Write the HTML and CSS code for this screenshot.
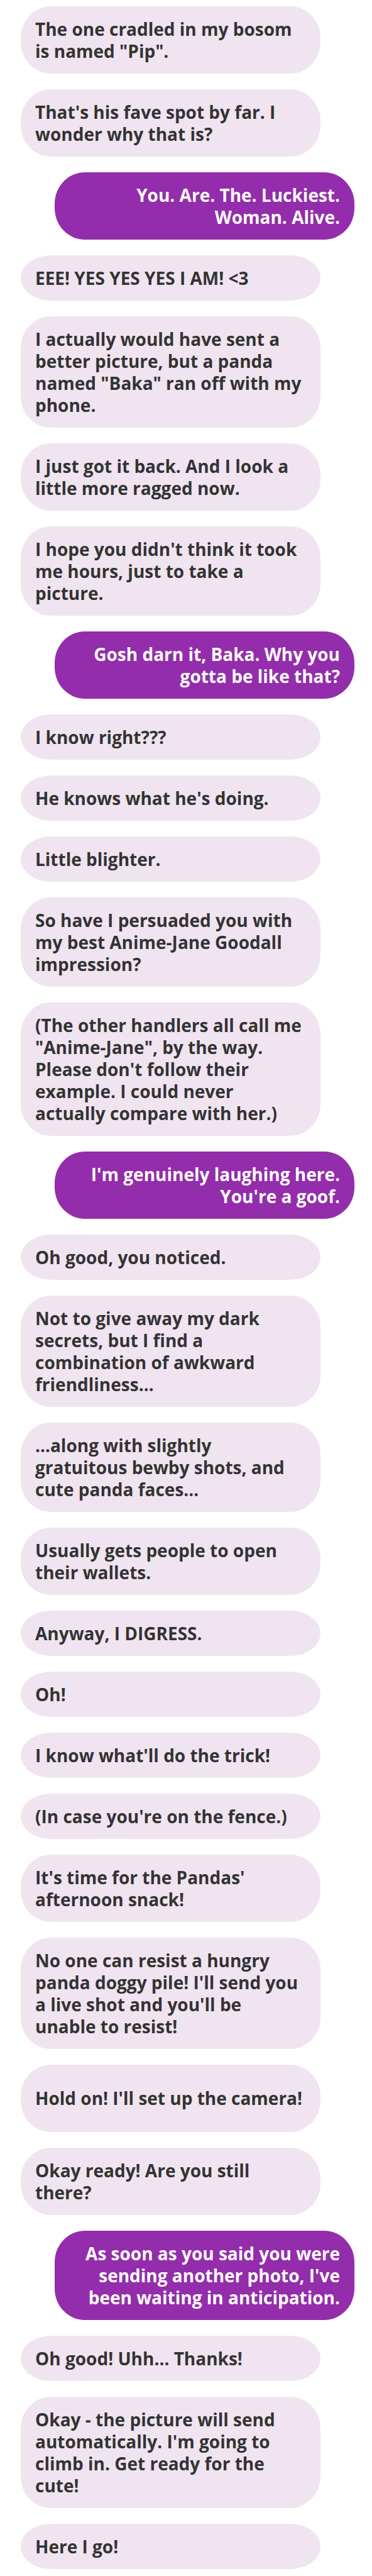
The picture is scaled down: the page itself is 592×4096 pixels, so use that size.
FILE: index.html
```html
<!DOCTYPE html>
<html lang="en">
<head>
<meta charset="utf-8">
<meta name="viewport" content="width=device-width, initial-scale=1">
<title>Messages</title>
<link rel="stylesheet" href="styles.css">
</head>
<body>
<main class="thread">
<p class="bubble">The one cradled in my bosom<br>is named "Pip".</p>
<p class="bubble">That's his fave spot by far. I<br>wonder why that is?</p>
<p class="bubble sent">You. Are. The. Luckiest.<br>Woman. Alive.</p>
<p class="bubble">EEE! YES YES YES I AM! &lt;3</p>
<p class="bubble">I actually would have sent a<br>better picture, but a panda<br>named "Baka" ran off with my<br>phone.</p>
<p class="bubble">I just got it back. And I look a<br>little more ragged now.</p>
<p class="bubble">I hope you didn't think it took<br>me hours, just to take a<br>picture.</p>
<p class="bubble sent">Gosh darn it, Baka. Why you<br>gotta be like that?</p>
<p class="bubble">I know right???</p>
<p class="bubble">He knows what he's doing.</p>
<p class="bubble">Little blighter.</p>
<p class="bubble">So have I persuaded you with<br>my best Anime-Jane Goodall<br>impression?</p>
<p class="bubble">(The other handlers all call me<br>"Anime-Jane", by the way.<br>Please don't follow their<br>example. I could never<br>actually compare with her.)</p>
<p class="bubble sent">I'm genuinely laughing here.<br>You're a goof.</p>
<p class="bubble">Oh good, you noticed.</p>
<p class="bubble">Not to give away my dark<br>secrets, but I find a<br>combination of awkward<br>friendliness…</p>
<p class="bubble">…along with slightly<br>gratuitous bewby shots, and<br>cute panda faces…</p>
<p class="bubble">Usually gets people to open<br>their wallets.</p>
<p class="bubble">Anyway, I DIGRESS.</p>
<p class="bubble">Oh!</p>
<p class="bubble">I know what'll do the trick!</p>
<p class="bubble">(In case you're on the fence.)</p>
<p class="bubble">It's time for the Pandas'<br>afternoon snack!</p>
<p class="bubble">No one can resist a hungry<br>panda doggy pile! I'll send you<br>a live shot and you'll be<br>unable to resist!</p>
<p class="bubble roomy">Hold on! I'll set up the camera!</p>
<p class="bubble">Okay ready! Are you still<br>there?</p>
<p class="bubble sent">As soon as you said you were<br>sending another photo, I've<br>been waiting in anticipation.</p>
<p class="bubble">Oh good! Uhh… Thanks!</p>
<p class="bubble">Okay - the picture will send<br>automatically. I'm going to<br>climb in. Get ready for the<br>cute!</p>
<p class="bubble">Here I go!</p>
</main>
</body>
</html>
```
FILE: styles.css
```css
* {
  box-sizing: border-box;
}

body {
  margin: 0;
  background: #fff;
  color: #333;
  font: 700 28px/35px "Open Sans", "Noto Sans", sans-serif;
}

.thread {
  display: flex;
  flex-direction: column;
  gap: 25px;
  padding: 10px 28px 12px 33px;
}

.bubble {
  margin: 0 54px 0 0;
  padding: 19px 23px 18px;
  border-radius: 48px / min(50px, 50%);
  background: #f0e4f0;
  white-space: nowrap;
}

.sent {
  margin: 0 0 0 54px;
  background: #932dab;
  color: #fff;
  text-align: right;
}

/* One line of text in a bubble as tall as two. */
.roomy {
  padding-top: 36px;
  padding-bottom: 36px;
}
```
